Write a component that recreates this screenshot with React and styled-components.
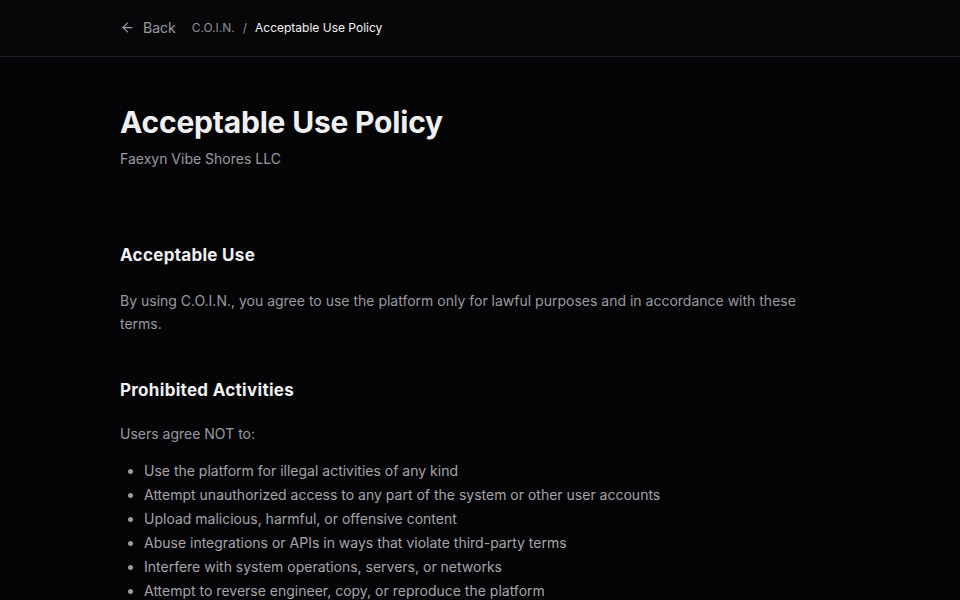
import React from 'react'
import styled, { createGlobalStyle } from 'styled-components'
import { ArrowLeft } from 'lucide-react'

const GlobalStyle = createGlobalStyle`
  html, body {
    margin: 0;
    padding: 0;
    background: #050507;
    font-family: Inter, "Noto Sans", sans-serif;
    -webkit-font-smoothing: antialiased;
  }
`

const prohibited = [
  'Use the platform for illegal activities of any kind',
  'Attempt unauthorized access to any part of the system or other user accounts',
  'Upload malicious, harmful, or offensive content',
  'Abuse integrations or APIs in ways that violate third-party terms',
  'Interfere with system operations, servers, or networks',
  'Attempt to reverse engineer, copy, or reproduce the platform',
]

const App = () => {
  return (
    <Page>
      <GlobalStyle />
      <TopBar>
        <Inner>
          <BackLink href="#">
            <ArrowLeft size={15} strokeWidth={2} />
            Back
          </BackLink>
          <Crumbs>
            <span className="parent">C.O.I.N.</span>
            <span className="sep">/</span>
            <span className="current">Acceptable Use Policy</span>
          </Crumbs>
        </Inner>
      </TopBar>
      <Main>
        <Title>Acceptable Use Policy</Title>
        <Company>Faexyn Vibe Shores LLC</Company>

        <Section $gap={74}>
          <SectionTitle>Acceptable Use</SectionTitle>
          <Para>
            By using C.O.I.N., you agree to use the platform only for lawful purposes and in
            accordance with these terms.
          </Para>
        </Section>

        <Section $gap={43}>
          <SectionTitle>Prohibited Activities</SectionTitle>
          <Para $top={20}>Users agree NOT to:</Para>
          <List>
            {prohibited.map((p) => (
              <li key={p}>{p}</li>
            ))}
          </List>
        </Section>
      </Main>
    </Page>
  )
}

export default App

const Page = styled.div`
  min-height: 100vh;
  background: #050507;
`
const TopBar = styled.header`
  height: 56px;
  background: #07070a;
  border-bottom: 1px solid #1c1c22;
`
const Inner = styled.div`
  max-width: 720px;
  margin: 0 auto;
  height: 100%;
  padding-bottom: 2px;
  box-sizing: border-box;
  display: flex;
  align-items: center;
  gap: 16px;
`
const BackLink = styled.a`
  display: flex;
  align-items: center;
  gap: 8px;
  color: #9a9aa0;
  font-size: 14px;
  text-decoration: none;
  svg {
    margin-top: 1px;
  }
`
const Crumbs = styled.div`
  display: flex;
  align-items: center;
  gap: 8px;
  font-size: 12px;
  .parent,
  .sep {
    color: #8e8e94;
  }
  .current {
    color: #f2f2f4;
  }
`
const Main = styled.main`
  max-width: 720px;
  margin: 0 auto;
  padding: 45px 0 40px;
`
const Title = styled.h1`
  margin: 0;
  font-size: 30px;
  line-height: 40px;
  font-weight: 700;
  color: #f0f0f2;
  letter-spacing: -0.2px;
`
const Company = styled.p`
  margin: 7px 0 0;
  font-size: 14px;
  line-height: 20px;
  color: #9a9aa0;
`
const Section = styled.section`
  margin-top: ${(p) => p.$gap || 32}px;
`
const SectionTitle = styled.h2`
  margin: 0;
  font-size: 17px;
  line-height: 24px;
  font-weight: 700;
  letter-spacing: 0.3px;
  color: #f0f0f2;
`
const Para = styled.p`
  margin: ${(p) => p.$top ?? 22}px 0 0;
  font-size: 14px;
  line-height: 23px;
  color: #9a9aa0;
  max-width: 690px;
`
const List = styled.ul`
  margin: 14px 0 0;
  padding-left: 24px;
  font-size: 14px;
  line-height: 24px;
  color: #a4a4aa;
  li::marker {
    color: #9a9aa0;
  }
`
